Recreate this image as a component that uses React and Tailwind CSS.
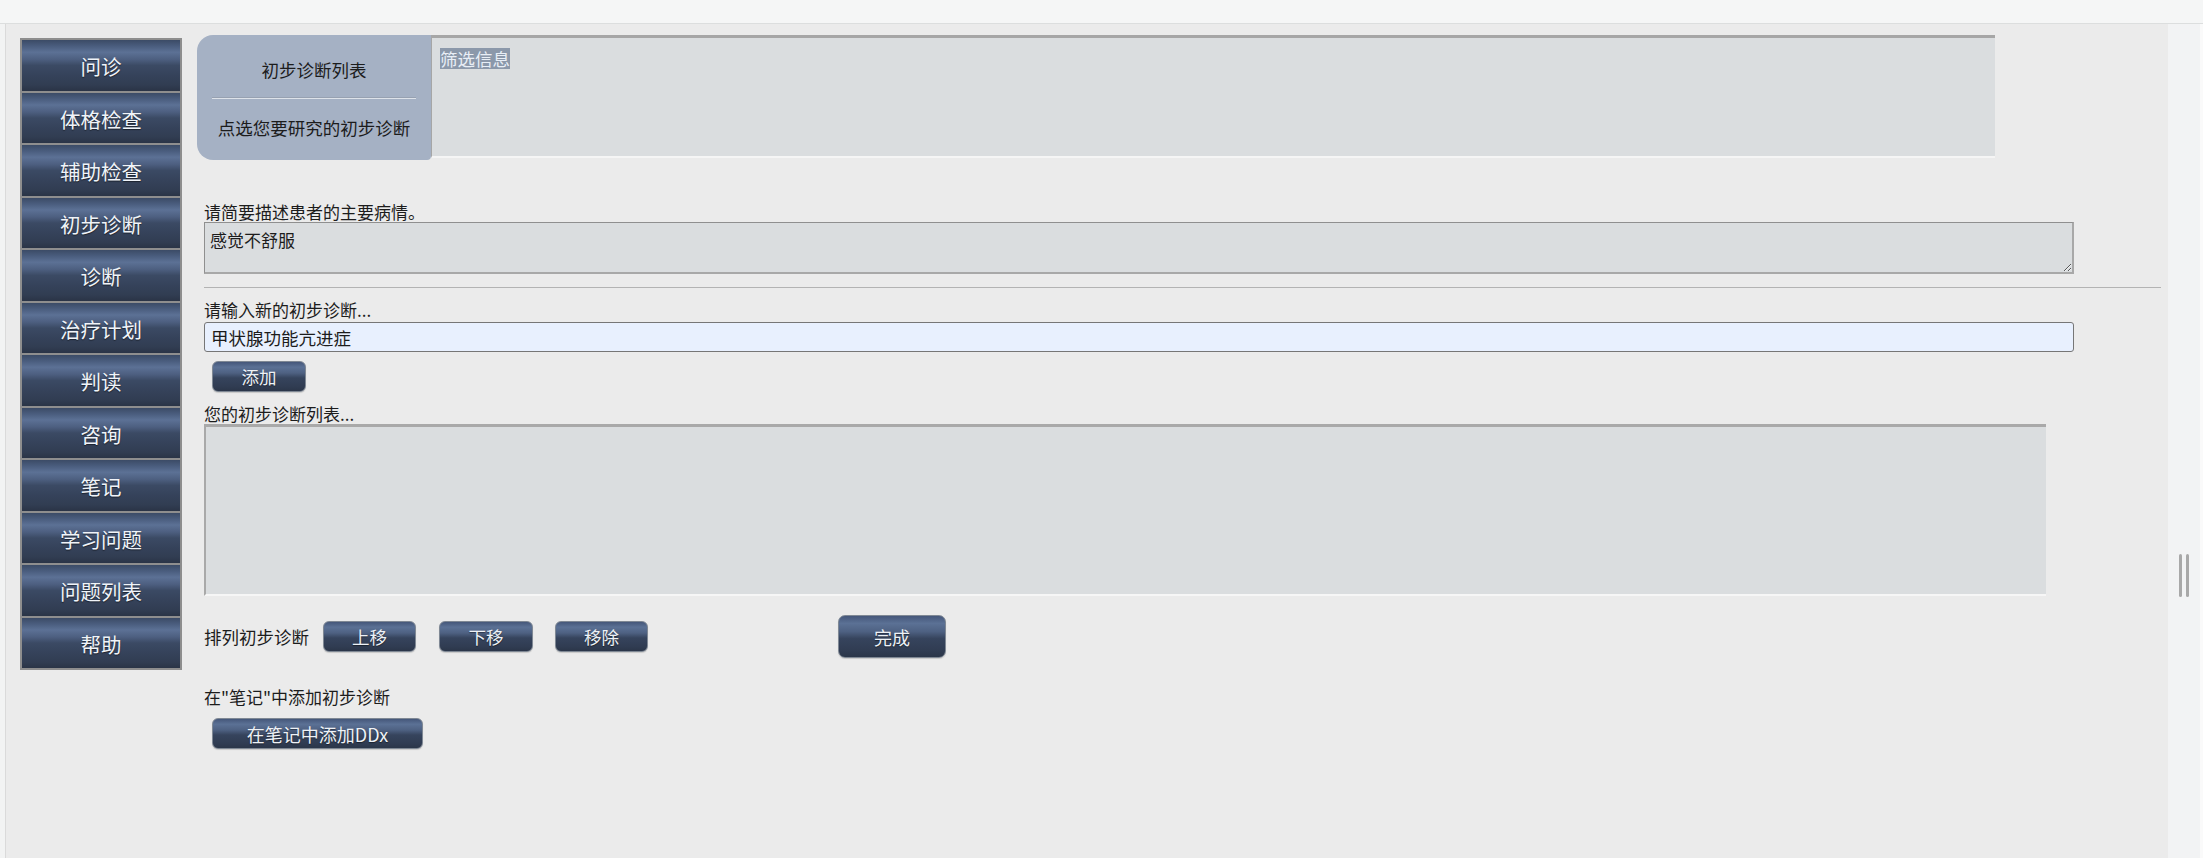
import React from "react";

const navItems = ["问诊", "体格检查", "辅助检查", "初步诊断", "诊断", "治疗计划", "判读", "咨询", "笔记", "学习问题", "问题列表", "帮助"];

function Btn({ className, children }) {
  return (
    <button
      className={
        "flex items-center justify-center border border-[#7f8894] text-[#eef2f7] leading-none [text-shadow:0_1px_1px_rgba(0,0,0,0.45)] bg-[linear-gradient(to_bottom,#45577a_0%,#5b7195_18%,#4e6182_38%,#36445d_55%,#303c52_85%,#2b3649_100%)] shadow-[0_1px_1px_rgba(0,0,0,0.15)] " +
        className
      }
    >
      {children}
    </button>
  );
}

export default function App() {
  return (
    <div className="w-[2203px] h-[858px] overflow-hidden bg-[#f4f5f5] flex flex-col font-['Noto_Sans_CJK_SC','Microsoft_YaHei',sans-serif] text-[#1c1c1c]">
      <div className="h-[23px] shrink-0 bg-[#f5f6f6]" />
      <div className="flex flex-1 border-t border-[#dcdede]">
        <div className="w-[5px] shrink-0 bg-[#f2f3f3]" />
        <div className="w-[2163px] shrink-0 bg-[#ebebeb] border-l border-[#dadada] flex items-start pl-[14px] pt-[11px]">
          {/* sidebar */}
          <div className="mt-[3px] w-[162px] shrink-0 border-2 border-[#8e8e8e] bg-[#8e8e8e] flex flex-col gap-[2px]">
            {navItems.map((t) => (
              <div
                key={t}
                className="h-[50.5px] flex items-center justify-center pt-[3px] text-[20.5px] text-[#f0f4f9] [text-shadow:0_1px_1px_rgba(0,0,0,0.5)] bg-[linear-gradient(to_bottom,#3b4b66_0%,#4a5d7e_12%,#5c7195_24%,#4d5f80_38%,#3b4a64_50%,#35425a_70%,#313d52_88%,#2a3446_100%)]"
              >
                {t}
              </div>
            ))}
          </div>

          {/* content */}
          <div className="ml-[15px] w-[1964px] flex flex-col">
            <div className="flex items-start">
              <div className="w-[234px] h-[125px] rounded-l-[16px] rounded-br-[4px] bg-[#a5b1c4] flex flex-col items-center">
                <div className="mt-[25px] h-[20px] leading-[20px] text-[17.5px] text-[#1c1c1c]">初步诊断列表</div>
                <div className="mt-[17px] w-[204px] h-[2px] border-t border-[#97a1b1] bg-[#dde2e9]" />
                <div className="mt-[19px] h-[20px] leading-[20px] text-[17.5px] text-[#1c1c1c]">点选您要研究的初步诊断</div>
              </div>
              <div className="w-[1564px] h-[123px] bg-[#dadddf] border-t-[3px] border-l border-[#a6a6a6] border-b-2 border-b-[#f5f5f5] pl-[8px] pt-[9px]">
                <span className="inline-block h-[21px] leading-[21px] text-[17.5px] bg-[#8b98aa] text-[#e8eef6]">筛选信息</span>
              </div>
            </div>

            <div className="pl-[7px] flex flex-col">
              <div className="mt-[42px] h-[20px] leading-[20px] text-[17px]">请简要描述患者的主要病情。</div>
              <textarea
                readOnly
                defaultValue="感觉不舒服"
                className="w-[1870px] h-[52px] bg-[#dadddf] border border-[#8f8f8f] border-r-2 border-b-2 border-r-[#a8a8a8] border-b-[#a8a8a8] px-[5px] pt-[7px] text-[17px] leading-[20px] text-[#1c1c1c] outline-none"
              />
              <div className="mt-[13px] w-[1957px] h-px bg-[#b3b3b3]" />
              <div className="mt-[12px] h-[20px] leading-[20px] text-[17px]">请输入新的初步诊断...</div>
              <input
                readOnly
                defaultValue="甲状腺功能亢进症"
                className="mt-[2px] w-[1870px] h-[30px] rounded-[3px] border border-[#767676] bg-[#e8f0fe] px-[6px] text-[17.5px] text-[#1c1c1c] outline-none"
              />
              <Btn className="mt-[9px] ml-[8px] w-[94px] h-[31px] rounded-[6px] text-[17.5px]">添加</Btn>
              <div className="mt-[12px] h-[20px] leading-[20px] text-[17px]">您的初步诊断列表...</div>
              <div className="w-[1842px] h-[172px] bg-[#dadddf] border-t-[3px] border-l-2 border-[#a9a9a9] border-b-2 border-b-[#f6f6f6]" />

              <div className="mt-[19px] h-[43px] flex items-center">
                <span className="text-[17.5px] leading-[20px]">排列初步诊断</span>
                <Btn className="ml-[14px] w-[93px] h-[31px] rounded-[6px] text-[17.5px]">上移</Btn>
                <Btn className="ml-[23px] w-[94px] h-[31px] rounded-[6px] text-[17.5px]">下移</Btn>
                <Btn className="ml-[22px] w-[93px] h-[31px] rounded-[6px] text-[17.5px]">移除</Btn>
                <Btn className="ml-[190px] w-[108px] h-[43px] rounded-[7px] text-[18px]">完成</Btn>
              </div>

              <div className="mt-[29px] h-[20px] leading-[20px] text-[17px]">在"笔记"中添加初步诊断</div>
              <Btn className="mt-[11px] ml-[8px] w-[211px] h-[31px] rounded-[6px] text-[18px]">在笔记中添加DDx</Btn>
            </div>
          </div>
        </div>
        <div className="w-[32px] shrink-0 bg-[#f2f3f4] pl-[11px] pt-[530px] flex gap-[4px] items-start">
          <div className="w-[3px] h-[43px] rounded-full bg-[#a8a8a8]" />
          <div className="w-[3px] h-[43px] rounded-full bg-[#a8a8a8]" />
        </div>
        <div className="w-[3px] shrink-0 bg-[#fafafa]" />
      </div>
    </div>
  );
}
